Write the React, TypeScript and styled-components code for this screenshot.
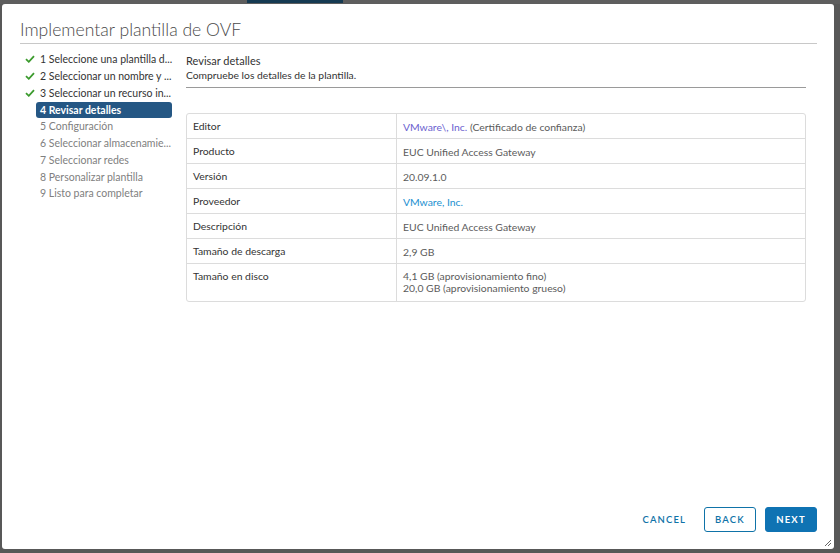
import styled, { createGlobalStyle } from "styled-components";

const GlobalStyle = createGlobalStyle`
  html, body {
    margin: 0;
    padding: 0;
    background: #585858;
    font-family: Lato, "Open Sans", sans-serif;
  }
`;

interface Step {
  label: string;
  state: "done" | "active" | "todo";
}

const steps: Step[] = [
  { label: "1 Seleccione una plantilla d...", state: "done" },
  { label: "2 Seleccionar un nombre y ...", state: "done" },
  { label: "3 Seleccionar un recurso in...", state: "done" },
  { label: "4 Revisar detalles", state: "active" },
  { label: "5 Configuración", state: "todo" },
  { label: "6 Seleccionar almacenamie...", state: "todo" },
  { label: "7 Seleccionar redes", state: "todo" },
  { label: "8 Personalizar plantilla", state: "todo" },
  { label: "9 Listo para completar", state: "todo" },
];

const Check = () => (
  <svg width="10" height="8" viewBox="0 0 10 8">
    <path d="M1 4.2 L3.8 6.8 L9 1.2" fill="none" stroke="#3c9b2e" strokeWidth="1.8" />
  </svg>
);

const App = () => {
  return (
    <Page>
      <GlobalStyle />
      <TopStrip>
        <TopTab />
      </TopStrip>
      <Dialog>
        <Header>Implementar plantilla de OVF</Header>
        <Body>
          <Nav>
            {steps.map((s) => (
              <NavItem key={s.label}>
                <CheckSlot>{s.state === "done" && <Check />}</CheckSlot>
                <NavLabel $state={s.state}>{s.label}</NavLabel>
              </NavItem>
            ))}
          </Nav>
          <Content>
            <StepTitle>Revisar detalles</StepTitle>
            <StepSub>Compruebe los detalles de la plantilla.</StepSub>
            <Rule />
            <Table>
              <tbody>
                <Row>
                  <Key>Editor</Key>
                  <Value>
                    <Visited>VMware\, Inc.</Visited> (Certificado de confianza)
                  </Value>
                </Row>
                <Row>
                  <Key>Producto</Key>
                  <Value>EUC Unified Access Gateway</Value>
                </Row>
                <Row>
                  <Key>Versión</Key>
                  <Value>20.09.1.0</Value>
                </Row>
                <Row>
                  <Key>Proveedor</Key>
                  <Value>
                    <Link>VMware, Inc.</Link>
                  </Value>
                </Row>
                <Row>
                  <Key>Descripción</Key>
                  <Value>EUC Unified Access Gateway</Value>
                </Row>
                <Row>
                  <Key>Tamaño de descarga</Key>
                  <Value>2,9 GB</Value>
                </Row>
                <Row>
                  <Key>Tamaño en disco</Key>
                  <Value $tall>
                    4,1 GB (aprovisionamiento fino)
                    <br />
                    20,0 GB (aprovisionamiento grueso)
                  </Value>
                </Row>
              </tbody>
            </Table>
          </Content>
        </Body>
        <Footer>
          <FlatButton>CANCEL</FlatButton>
          <OutlineButton>BACK</OutlineButton>
          <PrimaryButton>NEXT</PrimaryButton>
        </Footer>
        <Grip>
          <svg width="6" height="6" viewBox="0 0 6 6">
            <path d="M0 6 L6 0 M3 6 L6 3" stroke="#666" strokeWidth="1" />
          </svg>
        </Grip>
      </Dialog>
    </Page>
  );
};

const Page = styled.div`
  width: 840px;
  height: 553px;
  display: flex;
  flex-direction: column;
  padding: 0 6px 4px 2px;
  box-sizing: border-box;
  position: relative;
`;

const TopStrip = styled.div`
  height: 4px;
  display: flex;
  padding-left: 247px;
  background: #5e5e5e;
  margin: 0 -6px 0 -2px;
`;

const TopTab = styled.div`
  width: 96px;
  height: 3px;
  background: #163a52;
`;

const Dialog = styled.div`
  flex: 1;
  background: #fff;
  border-radius: 3px;
  display: flex;
  flex-direction: column;
  padding: 0 17px 17px 18px;
  position: relative;
`;

const Header = styled.div`
  height: 36px;
  display: flex;
  align-items: flex-end;
  padding-bottom: 3px;
  border-bottom: 1px solid #c8c8c8;
  font-size: 17.6px;
  font-weight: 300;
  color: #4a4a4a;
`;

const Body = styled.div`
  flex: 1;
  display: flex;
  gap: 14px;
  padding-top: 7px;
`;

const Nav = styled.div`
  width: 152px;
  display: flex;
  flex-direction: column;
`;

const NavItem = styled.div`
  height: 16.75px;
  flex-shrink: 0;
  display: flex;
  align-items: center;
`;

const CheckSlot = styled.div`
  width: 16px;
  flex-shrink: 0;
  box-sizing: border-box;
  padding-left: 5px;
  display: flex;
  align-items: center;
`;

const NavLabel = styled.div<{ $state: "done" | "active" | "todo" }>`
  flex: 1;
  height: 16px;
  line-height: 16px;
  padding-left: 4px;
  border-radius: 3px;
  font-size: 10.5px;
  white-space: nowrap;
  color: ${(p) => (p.$state === "todo" ? "#808080" : p.$state === "active" ? "#fff" : "#333")};
  background: ${(p) => (p.$state === "active" ? "#255784" : "transparent")};
  font-weight: ${(p) => (p.$state === "active" ? 700 : 400)};
`;

const Content = styled.div`
  flex: 1;
  margin: 4px 11px 0 0;
  display: flex;
  flex-direction: column;
`;

const StepTitle = styled.div`
  font-size: 11px;
  color: #333;
  line-height: 15px;
  margin-top: -2px;
`;

const StepSub = styled.div`
  font-size: 10.3px;
  color: #333;
  line-height: 14px;
`;

const Rule = styled.div`
  height: 1px;
  background: #9a9a9a;
  margin-top: 5px;
  margin-bottom: 25px;
`;

const Table = styled.table`
  border-collapse: separate;
  border-spacing: 0;
  border: 1px solid #dcdcdc;
  border-radius: 3px;
  width: 100%;
  font-size: 10.4px;
`;

const Row = styled.tr`
  &:not(:last-child) td {
    border-bottom: 1px solid #dcdcdc;
  }
`;

const Key = styled.td`
  width: 210px;
  height: 25px;
  padding: 6px 0 0 6px;
  vertical-align: top;
  color: #333;
  border-right: 1px solid #dcdcdc;
  box-sizing: border-box;
`;

const Value = styled.td<{ $tall?: boolean }>`
  height: ${(p) => (p.$tall ? "37px" : "25px")};
  padding: ${(p) => (p.$tall ? "6px" : "7px")} 0 0 6px;
  vertical-align: top;
  color: #5b5b5b;
  line-height: 12px;
  box-sizing: border-box;
`;

const Visited = styled.span`
  color: #6b5fcf;
`;

const Link = styled.span`
  color: #1a8fd0;
`;

const Footer = styled.div`
  display: flex;
  justify-content: flex-end;
  align-items: center;
  gap: 9px;
`;

const FlatButton = styled.button`
  height: 25px;
  padding: 0 9px;
  border: none;
  background: none;
  color: #0f73a8;
  font-family: inherit;
  font-size: 9.5px;
  font-weight: 600;
  letter-spacing: 1.1px;
`;

const OutlineButton = styled.button`
  height: 25px;
  width: 52px;
  border: 1px solid #0f73a8;
  border-radius: 3px;
  background: #fff;
  color: #0f73a8;
  font-family: inherit;
  font-size: 9.5px;
  font-weight: 600;
  letter-spacing: 1.2px;
`;

const PrimaryButton = styled(OutlineButton)`
  background: #0f73b3;
  border-color: #0f73b3;
  color: #fff;
  font-weight: 700;
`;

const Grip = styled.div`
  position: absolute;
  right: 3px;
  bottom: 3px;
  display: flex;
`;

export default App;
